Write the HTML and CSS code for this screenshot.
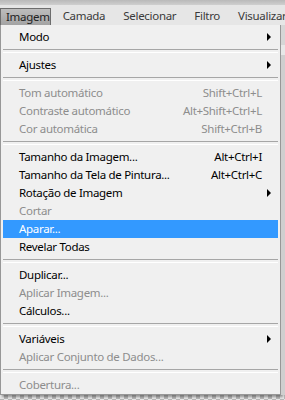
FILE: index.html
```html
<!DOCTYPE html>
<html lang="pt">
<head>
    <meta charset="UTF-8">
    <title>Imagem - menu</title>
    <link rel="stylesheet" href="styles.css">
</head>
<body>
    <div class="topstrip"></div>
    <div class="menubar">
        <span class="menubar-item active">Imagem</span>
        <span class="menubar-item">Camada</span>
        <span class="menubar-item">Selecionar</span>
        <span class="menubar-item">Filtro</span>
        <span class="menubar-item last">Visualizar</span>
    </div>

    <div class="stage">
        <div class="dropdown">
            <div class="item sub">Modo</div>
            <div class="sep"></div>
            <div class="item sub">Ajustes</div>
            <div class="sep"></div>
            <div class="item off">Tom automático<span class="key">Shift+Ctrl+L</span></div>
            <div class="item off">Contraste automático<span class="key">Alt+Shift+Ctrl+L</span></div>
            <div class="item off">Cor automática<span class="key">Shift+Ctrl+B</span></div>
            <div class="sep"></div>
            <div class="item">Tamanho da Imagem...<span class="key">Alt+Ctrl+I</span></div>
            <div class="item">Tamanho da Tela de Pintura...<span class="key">Alt+Ctrl+C</span></div>
            <div class="item sub">Rotação de Imagem</div>
            <div class="item off">Cortar</div>
            <div class="item selected">Aparar...</div>
            <div class="item">Revelar Todas</div>
            <div class="sep"></div>
            <div class="item">Duplicar...</div>
            <div class="item off">Aplicar Imagem...</div>
            <div class="item">Cálculos...</div>
            <div class="sep"></div>
            <div class="item sub">Variáveis</div>
            <div class="item off">Aplicar Conjunto de Dados...</div>
            <div class="sep"></div>
            <div class="item off">Cobertura...</div>
        </div>
        <div class="behind"></div>
    </div>
    <div class="checker"></div>
</body>
</html>
```

FILE: styles.css
```css
* {
    margin: 0;
    padding: 0;
    box-sizing: border-box;
}

body {
    font-family: "Noto Sans", "Open Sans", sans-serif;
    font-size: 11.5px;
    letter-spacing: -0.3px;
    background: #f0f0f0;
    width: 285px;
    height: 400px;
    overflow: hidden;
    color: #000;
}

.topstrip {
    height: 5px;
    background: linear-gradient(#b9b9b9, #cfcfcf);
}

.menubar {
    height: 20px;
    background: #e6e6e6;
    display: flex;
    align-items: flex-end;
    white-space: nowrap;
}

.menubar-item {
    height: 17px;
    line-height: 16px;
    padding: 0 9px;
    color: #3a3a3a;
}

.menubar-item.active {
    width: 55px;
    margin-right: 3px;
    padding: 0 0 0 5px;
    background: linear-gradient(#bdbdbd, #a3a3a3);
    border: 1px solid #6d6d6d;
    border-bottom: none;
    color: #222;
}

.menubar-item.last {
    padding-right: 0;
}

.stage {
    display: flex;
}

.dropdown {
    width: 281px;
    background: #f0f0f0;
    border: 1px solid #979797;
    border-top: none;
    padding-top: 3px;
    box-shadow: 2px 2px 2px rgba(0, 0, 0, 0.35);
}

.behind {
    flex: 1;
    background: linear-gradient(#d6d6d6 0, #d6d6d6 20px, #e8e8e8 20px, #e8e8e8 30px, #cfcfcf 30px);
}

.item {
    height: 18px;
    line-height: 18px;
    padding: 0 16px;
    margin: 0 2px;
    display: flex;
    justify-content: space-between;
    position: relative;
    white-space: nowrap;
}

.item.off {
    color: #8d8d8d;
}

.item.selected {
    background: #3399ff;
    color: #fff;
}

.item.sub::after {
    content: "";
    position: absolute;
    right: 7px;
    top: 5px;
    border-left: 4px solid #000;
    border-top: 4px solid transparent;
    border-bottom: 4px solid transparent;
}

.key {
    text-align: right;
}

.sep {
    height: 10px;
    padding: 3px 2px 5px;
}

.sep::before {
    content: "";
    display: block;
    height: 2px;
    border-top: 1px solid #a6a6a6;
    border-bottom: 1px solid #ffffff;
}

.checker {
    height: 10px;
    background-color: #e4e4e4;
    background-image:
        linear-gradient(45deg, #b5b5b5 25%, transparent 25%, transparent 75%, #b5b5b5 75%),
        linear-gradient(45deg, #b5b5b5 25%, transparent 25%, transparent 75%, #b5b5b5 75%);
    background-size: 8px 8px;
    background-position: 0 0, 4px 4px;
}
```
